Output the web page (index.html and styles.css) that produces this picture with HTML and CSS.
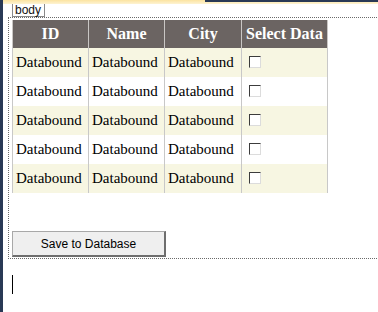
FILE: index.html
```html
<!DOCTYPE html>
<html lang="en">
<head>
    <meta charset="UTF-8">
    <title>Designer</title>
    <link rel="stylesheet" href="styles.css">
</head>
<body>
    <div class="window">
        <div class="tabstrip"><div class="tab-dark"></div></div>
        <div class="surface">
            <div class="tag-label">body</div>
            <div class="form-box">
                <table class="grid">
                    <tr>
                        <th class="col-id">ID</th>
                        <th class="col-name">Name</th>
                        <th class="col-city">City</th>
                        <th class="col-sel">Select Data</th>
                    </tr>
                    <tr class="alt">
                        <td>Databound</td><td>Databound</td><td>Databound</td><td><span class="check"></span></td>
                    </tr>
                    <tr>
                        <td>Databound</td><td>Databound</td><td>Databound</td><td><span class="check"></span></td>
                    </tr>
                    <tr class="alt">
                        <td>Databound</td><td>Databound</td><td>Databound</td><td><span class="check"></span></td>
                    </tr>
                    <tr>
                        <td>Databound</td><td>Databound</td><td>Databound</td><td><span class="check"></span></td>
                    </tr>
                    <tr class="alt">
                        <td>Databound</td><td>Databound</td><td>Databound</td><td><span class="check"></span></td>
                    </tr>
                </table>
                <button class="save-btn" type="button">Save to Database</button>
            </div>
            <div class="caret"></div>
        </div>
    </div>
</body>
</html>
```

FILE: styles.css
```css
html, body {
    margin: 0;
    padding: 0;
    height: 100%;
    overflow: hidden;
    background: #ffffff;
}
.window {
    height: 100%;
    border-left: 3px solid #293955;
    box-sizing: border-box;
}
.tabstrip {
    height: 4px;
    background: linear-gradient(#fbe3a0, #fdf3d2);
}
.tab-dark {
    margin-left: 202px;
    height: 2px;
    background: #293955;
}
.surface {
    padding-left: 5px;
}
.tag-label {
    display: block;
    width: max-content;
    margin-left: 4px;
    height: 12px;
    padding: 0 3px 0 2px;
    border: 1px solid #8a8a8a;
    border-top: none;
    font-family: "Liberation Sans", Arial, sans-serif;
    font-size: 12px;
    line-height: 12px;
    color: #111;
}
.form-box {
    width: 420px;
    border: 1px dotted #6a6a6a;
    padding: 2px 0 1px 3px;
}
.grid {
    border-collapse: collapse;
    font-family: "Liberation Serif", "Times New Roman", serif;
    font-size: 15px;
    color: #000;
}
.grid th {
    background: #6b6462;
    color: #ffffff;
    font-size: 16px;
    font-weight: bold;
    height: 28px;
    padding: 0 4px;
    border-left: 1px solid #c9c6c4;
    border-right: 1px solid #c9c6c4;
    box-sizing: border-box;
}
.grid td {
    height: 29px;
    padding: 0 3px;
    border-left: 1px solid #c8c8c8;
    border-right: 1px solid #c8c8c8;
    box-sizing: border-box;
    white-space: nowrap;
}
.col-id { width: 76px; }
.col-name { width: 76px; }
.col-city { width: 77px; }
.col-sel { width: 86px; }
.grid td:last-child {
    padding-left: 7px;
}
.grid tr.alt td {
    background: #f7f6e2;
}
.check {
    display: inline-block;
    width: 10px;
    height: 10px;
    border-top: 1px solid #3c3c3c;
    border-left: 1px solid #3c3c3c;
    border-right: 1px solid #dcdcdc;
    border-bottom: 1px solid #dcdcdc;
    background: #ffffff;
    vertical-align: -1px;
}
.save-btn {
    display: block;
    margin-top: 38px;
    width: 154px;
    height: 26px;
    background: #efefef;
    border-top: 1px solid #a8a8a8;
    border-left: 1px solid #a8a8a8;
    border-right: 2px solid #6e6e6e;
    border-bottom: 2px solid #6e6e6e;
    font-family: "Liberation Sans", Arial, sans-serif;
    font-size: 12px;
    color: #000;
    padding: 0;
}
.caret {
    margin-left: 4px;
    margin-top: 16px;
    width: 1px;
    height: 19px;
    background: #000;
}
```
